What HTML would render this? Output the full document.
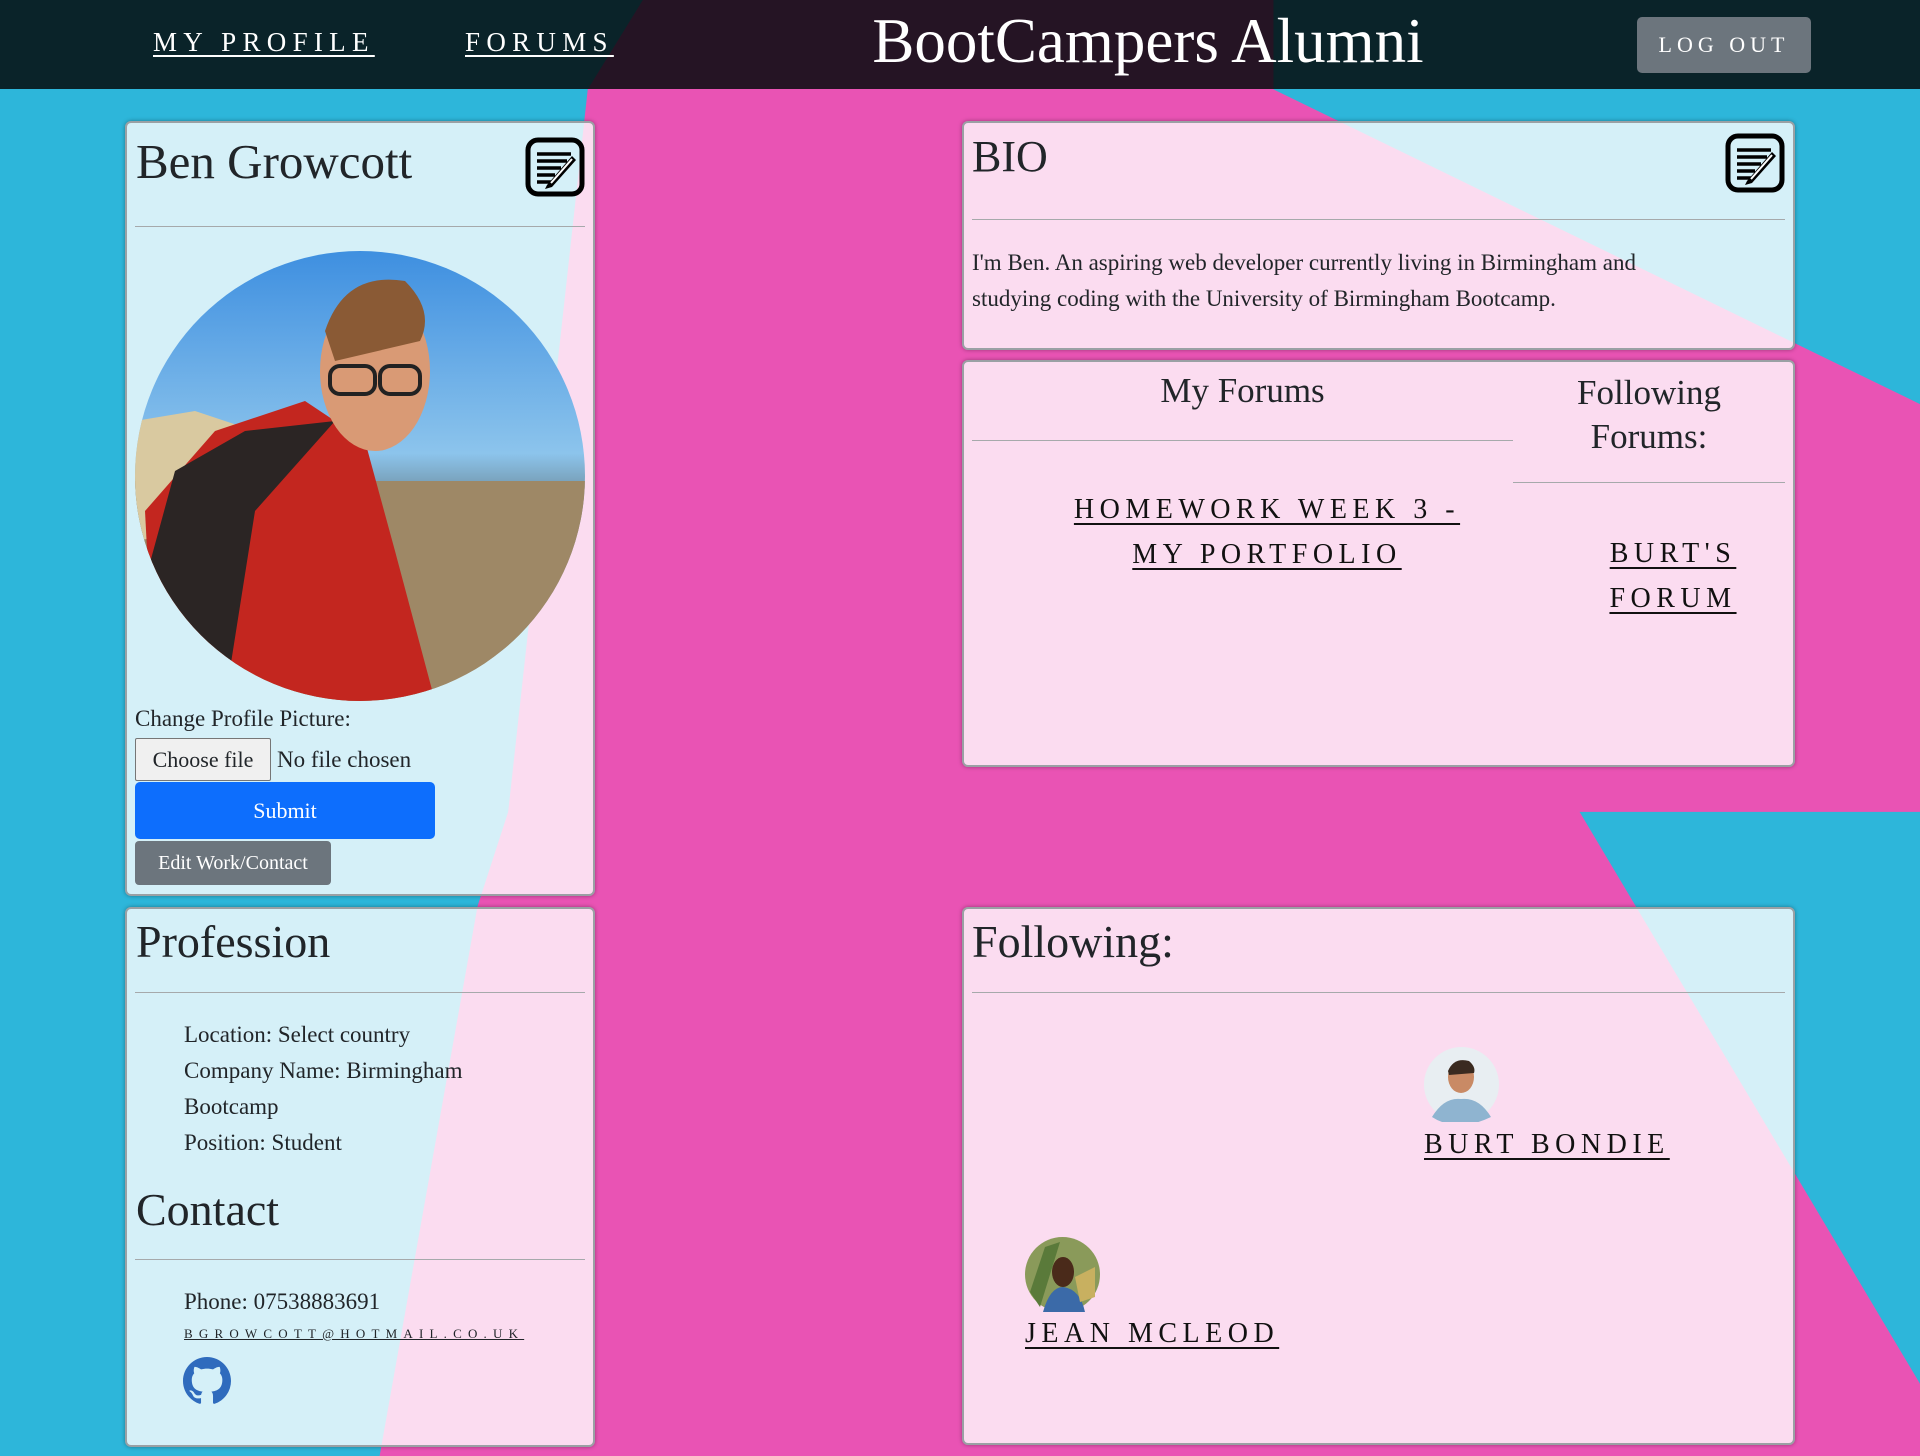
<!DOCTYPE html>
<html><head><meta charset="utf-8"><style>
*{box-sizing:border-box;margin:0;padding:0}
body{width:1920px;height:1456px;overflow:hidden;position:relative;background:#2db6da;font-family:"Liberation Serif","DejaVu Serif",serif;color:#212529}
.abs{position:absolute}
#bg{position:absolute;left:0;top:0}
nav{position:absolute;left:0;top:0;width:1920px;height:89px;background:rgba(5,10,12,0.86)}
nav a{position:absolute;color:#fff;text-decoration:underline;font-size:27px;letter-spacing:6.3px;top:27px;text-underline-offset:4px}
.title{position:absolute;left:866px;top:5px;width:564px;text-align:center;color:#fff;font-size:63px;white-space:nowrap}
.logout{position:absolute;left:1637px;top:17px;width:174px;height:56px;background:#6c757d;border-radius:5px;color:#fff;font-size:22px;letter-spacing:5px;text-align:center;line-height:56px}
.card{position:absolute;background:rgba(255,255,255,0.8);border:2px solid #9aa0a4;border-radius:6px;box-shadow:0 0 4px rgba(0,0,0,.35)}
.hr{position:absolute;height:1px;background:#a6a9ab}
.h{position:absolute;font-size:46px;white-space:nowrap}
.t{position:absolute;font-size:23px;white-space:nowrap}
.lnk{position:absolute;font-size:28px;letter-spacing:5.5px;text-decoration:underline;text-underline-offset:5px;text-align:center;line-height:45px;color:#111}
</style></head><body>
<svg id="bg" width="1920" height="1456" viewBox="0 0 1568 1189" preserveAspectRatio="none">
<polygon fill="#e953b4" points="525,0 1040,0 1040,73 1568,330 1568,663 1290,663 1568,1130 1568,1189 310,1189 390,740 415,663 480,73"/>
</svg>
<nav>
<a style="left:153px">MY PROFILE</a>
<a style="left:465px">FORUMS</a>
<div class="title">BootCampers Alumni</div>
<div class="logout">LOG OUT</div>
</nav>

<!-- card 1 -->
<div class="card" style="left:125px;top:121px;width:470px;height:775px"></div>
<div class="h" style="left:136px;top:133px;font-size:49px">Ben Growcott</div>
<svg class="abs" style="left:525px;top:137px" width="60" height="60" viewBox="0 0 60 60"><rect x="3" y="3" width="54" height="54" rx="10" fill="none" stroke="#000" stroke-width="5"/><g stroke="#000" stroke-width="3.5"><line x1="12" y1="17" x2="46" y2="17"/><line x1="12" y1="24" x2="42" y2="24"/><line x1="12" y1="31" x2="36" y2="31"/><line x1="12" y1="38" x2="30" y2="38"/><line x1="12" y1="45" x2="26" y2="45"/></g><path d="M22 48 L47 19 L51 23 L27 50 L20 52 Z" fill="#000"/><path d="M26 46 L47 22" stroke="#fff" stroke-width="2"/></svg>
<div class="hr" style="left:135px;top:226px;width:450px"></div>
<svg class="abs" style="left:135px;top:251px" width="450" height="450" viewBox="0 0 450 450">
<defs><clipPath id="c"><circle cx="225" cy="225" r="225"/></clipPath>
<linearGradient id="sky" x1="0" y1="0" x2="0" y2="1"><stop offset="0" stop-color="#3e8fe0"/><stop offset=".45" stop-color="#8cc4ec"/><stop offset=".55" stop-color="#6f8fa0"/><stop offset="1" stop-color="#a8906f"/></linearGradient></defs>
<g clip-path="url(#c)"><rect width="450" height="450" fill="url(#sky)"/>
<rect x="0" y="230" width="450" height="220" fill="#9e8866"/>
<path d="M0 170 L60 160 L120 180 L120 270 L0 290Z" fill="#d9c9a0"/>
<path d="M20 450 L10 260 L80 180 L170 150 L230 190 L260 300 L300 450Z" fill="#c3261f"/>
<path d="M10 330 L40 220 L110 180 L200 170 L120 260 L90 450 L20 450Z" fill="#2b2524"/>
<ellipse cx="240" cy="120" rx="55" ry="80" fill="#d99a75"/>
<path d="M190 80 Q210 20 270 30 Q300 60 285 90 L200 110Z" fill="#8a5a35"/>
<rect x="195" y="115" width="45" height="28" rx="10" fill="none" stroke="#222" stroke-width="4"/><rect x="245" y="115" width="40" height="28" rx="10" fill="none" stroke="#222" stroke-width="4"/>
</g></svg>
<div class="t" style="left:135px;top:706px">Change Profile Picture:</div>
<div class="abs" style="left:135px;top:738px;width:136px;height:43px;background:#f0f0f0;border:1px solid #767676;border-radius:2px;font-size:22px;text-align:center;line-height:41px">Choose file</div>
<div class="t" style="left:277px;top:747px">No file chosen</div>
<div class="abs" style="left:135px;top:782px;width:300px;height:57px;background:#0d6efd;border-radius:5px;color:#fff;font-size:22px;text-align:center;line-height:57px">Submit</div>
<div class="abs" style="left:135px;top:841px;width:196px;height:44px;background:#6c757d;border-radius:4px;color:#fff;font-size:20px;text-align:center;line-height:44px">Edit Work/Contact</div>

<!-- card 2 -->
<div class="card" style="left:125px;top:907px;width:470px;height:540px"></div>
<div class="h" style="left:136px;top:915px">Profession</div>
<div class="hr" style="left:135px;top:992px;width:450px"></div>
<div class="t" style="left:184px;top:1022px">Location: Select country</div>
<div class="t" style="left:184px;top:1058px">Company Name: Birmingham</div>
<div class="t" style="left:184px;top:1094px">Bootcamp</div>
<div class="t" style="left:184px;top:1130px">Position: Student</div>
<div class="h" style="left:136px;top:1183px">Contact</div>
<div class="hr" style="left:135px;top:1259px;width:450px"></div>
<div class="t" style="left:184px;top:1289px">Phone: 07538883691</div>
<div class="abs" style="left:184px;top:1326px;font-size:13px;letter-spacing:6.2px;text-decoration:underline;white-space:nowrap">BGROWCOTT@HOTMAIL.CO.UK</div>
<svg class="abs" style="left:183px;top:1357px" width="48" height="48" viewBox="0 0 16 16"><path fill="#2f6bbd" d="M8 0C3.58 0 0 3.580 0 8c0 3.54 2.29 6.53 5.47 7.590.4.07.55-.17.55-.38 0-.19-.01-.82-.01-1.49-2.010.37-2.53-.49-2.69-.94-.09-.23-.48-.94-.82-1.13-.28-.15-.68-.52-.01-.53.63-.01 1.08.58 1.23.82.72 1.21 1.87.87 2.33.66.07-.52.28-.87.51-1.07-1.78-.2-3.64-.89-3.64-3.95 0-.87.31-1.59.82-2.15-.08-.2-.36-1.02.08-2.12 0 0 .67-.21 2.2.82.64-.18 1.32-.27 2-.27.68 0 1.36.09 2 .27 1.53-1.04 2.2-.82 2.2-.82.44 1.1.16 1.92.08 2.12.51.56.82 1.27.82 2.15 0 3.07-1.87 3.75-3.65 3.95.29.25.54.73.54 1.48 0 1.07-.01 1.93-.01 2.2 0 .21.15.46.55.38A8.013 8.013 0 0016 8c0-4.42-3.58-8-8-8z"/></svg>

<!-- bio -->
<div class="card" style="left:962px;top:121px;width:833px;height:229px"></div>
<div class="h" style="left:972px;top:131px;font-size:44px">BIO</div>
<svg class="abs" style="left:1725px;top:133px" width="60" height="60" viewBox="0 0 60 60"><rect x="3" y="3" width="54" height="54" rx="10" fill="none" stroke="#000" stroke-width="5"/><g stroke="#000" stroke-width="3.5"><line x1="12" y1="17" x2="46" y2="17"/><line x1="12" y1="24" x2="42" y2="24"/><line x1="12" y1="31" x2="36" y2="31"/><line x1="12" y1="38" x2="30" y2="38"/><line x1="12" y1="45" x2="26" y2="45"/></g><path d="M22 48 L47 19 L51 23 L27 50 L20 52 Z" fill="#000"/><path d="M26 46 L47 22" stroke="#fff" stroke-width="2"/></svg>
<div class="hr" style="left:972px;top:219px;width:813px"></div>
<div class="t" style="left:972px;top:245px;line-height:36px;white-space:normal;width:740px">I'm Ben. An aspiring web developer currently living in Birmingham and studying coding with the University of Birmingham Bootcamp.</div>

<!-- forums -->
<div class="card" style="left:962px;top:360px;width:833px;height:407px"></div>
<div class="abs" style="left:972px;top:371px;width:541px;text-align:center;font-size:35px">My Forums</div>
<div class="hr" style="left:972px;top:440px;width:541px"></div>
<div class="abs" style="left:1513px;top:371px;width:272px;text-align:center;font-size:35px;line-height:44px">Following<br>Forums:</div>
<div class="hr" style="left:1513px;top:482px;width:272px"></div>
<div class="lnk" style="left:1000px;top:487px;width:534px">HOMEWORK WEEK 3 -<br>MY PORTFOLIO</div>
<div class="lnk" style="left:1563px;top:531px;width:220px">BURT'S<br>FORUM</div>

<!-- following -->
<div class="card" style="left:962px;top:907px;width:833px;height:538px"></div>
<div class="h" style="left:972px;top:915px">Following:</div>
<div class="hr" style="left:972px;top:992px;width:813px"></div>
<svg class="abs" style="left:1424px;top:1047px" width="75" height="75" viewBox="0 0 75 75"><circle cx="37.5" cy="37.5" r="37.5" fill="#e8eef2"/><path d="M8 70 Q20 50 37 52 Q55 50 67 70 Q50 78 37 78 Q20 78 8 70Z" fill="#8fb4d0"/><ellipse cx="37" cy="30" rx="13" ry="16" fill="#c98a65"/><path d="M24 24 Q30 10 45 14 Q52 20 50 26 L25 28Z" fill="#3a2a20"/></svg>
<div class="lnk" style="left:1424px;top:1122px;white-space:nowrap">BURT BONDIE</div>
<svg class="abs" style="left:1025px;top:1237px" width="75" height="75" viewBox="0 0 75 75"><circle cx="37.5" cy="37.5" r="37.5" fill="#8a9a5a"/><path d="M5 55 L20 10 L35 5 L15 70Z" fill="#5a7a3a"/><path d="M18 75 Q25 50 38 50 Q55 52 60 75Z" fill="#3b6aa8"/><ellipse cx="38" cy="35" rx="11" ry="15" fill="#4a2a1a"/><path d="M50 40 L70 30 L70 60 L55 65Z" fill="#c8b060"/></svg>
<div class="lnk" style="left:1025px;top:1311px;white-space:nowrap">JEAN MCLEOD</div>
</body></html>
